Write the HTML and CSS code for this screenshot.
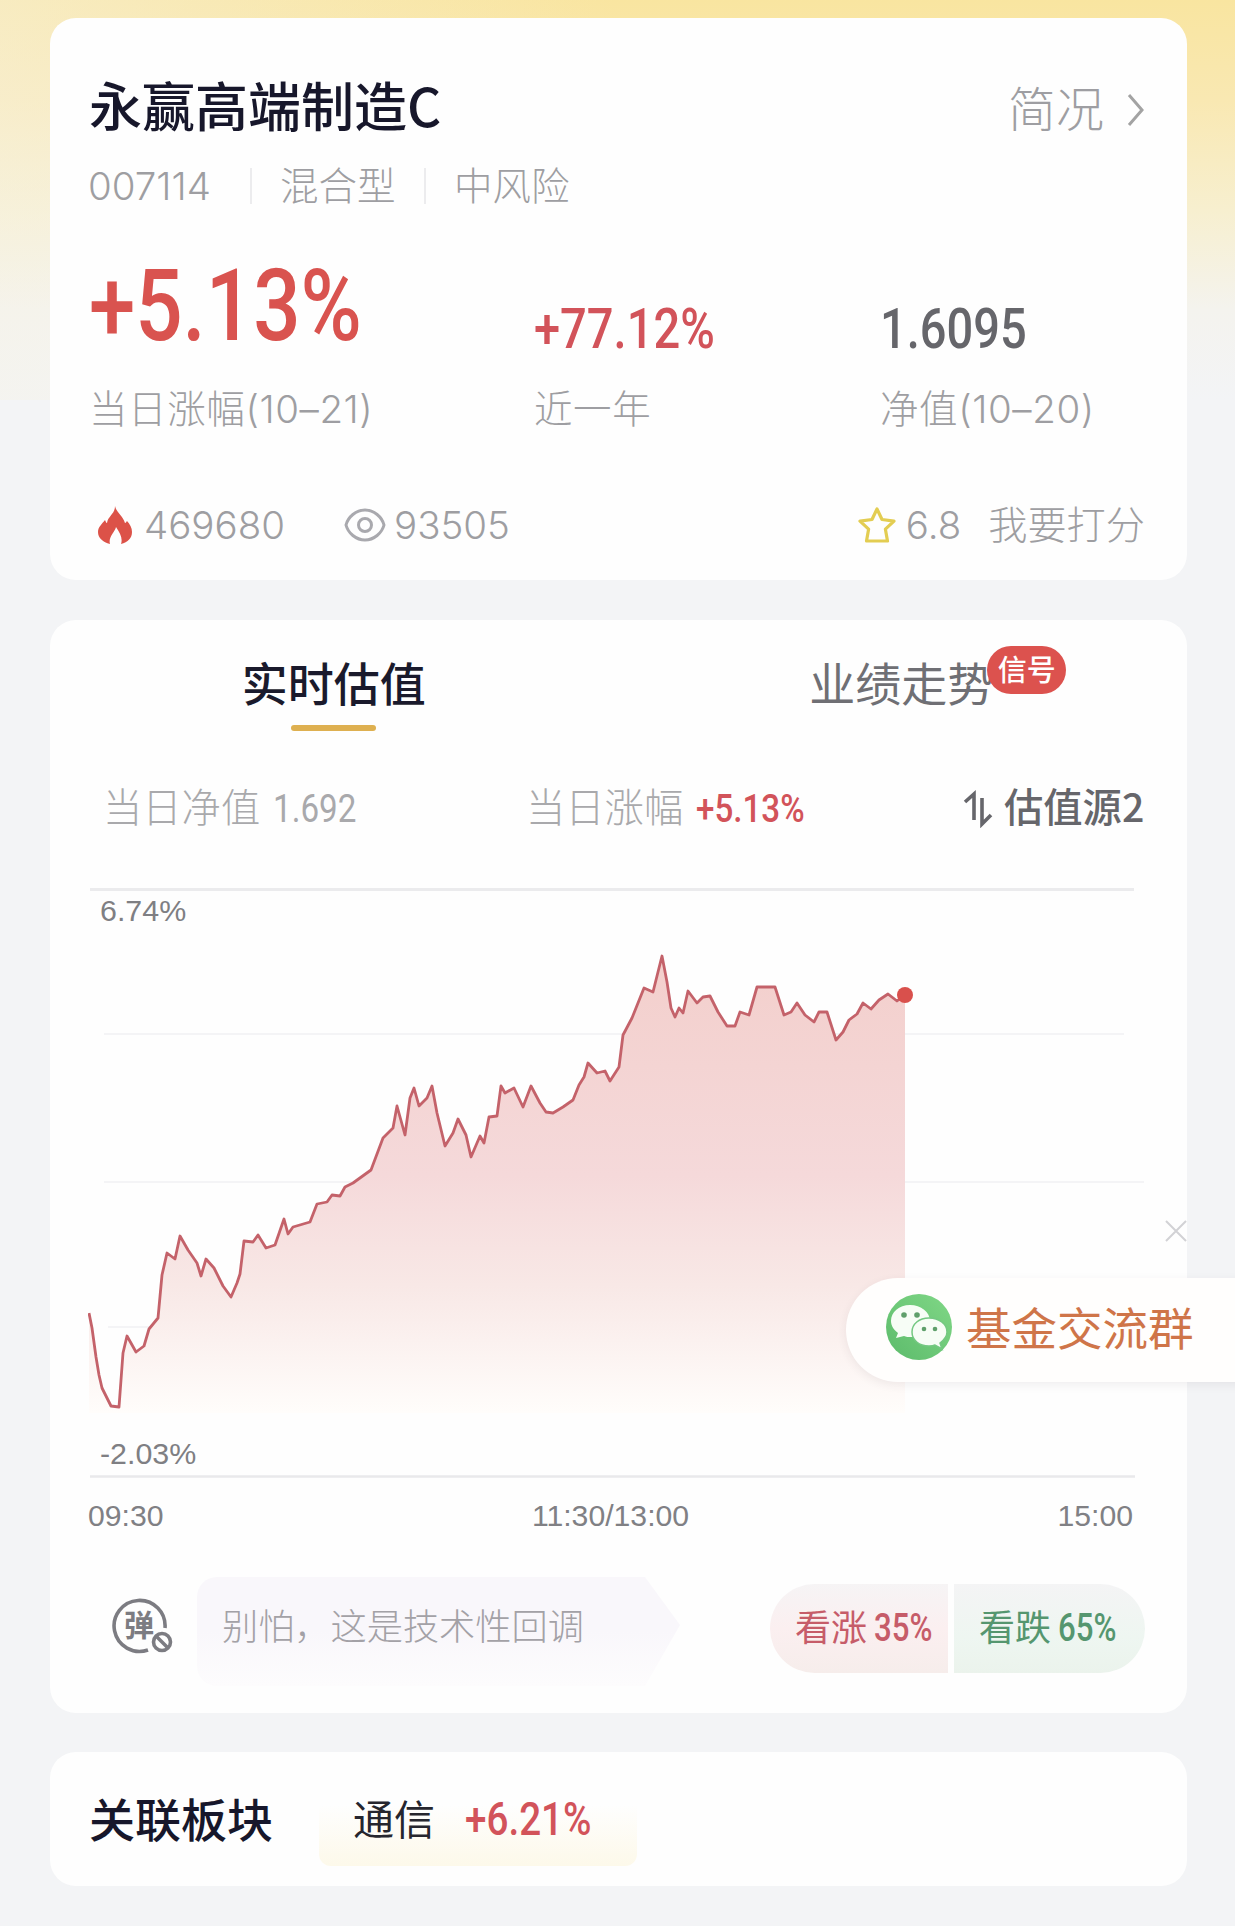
FILE: index.html
```html
<!DOCTYPE html>
<html lang="zh-CN">
<head>
    <meta charset="UTF-8">
    <meta name="viewport" content="width=device-width, initial-scale=1.0">
    <title>永赢高端制造C</title>
    <link rel="stylesheet" href="styles.css">
</head>
<body>
    <main class="page">
        <section class="card fund">
            <div class="fund-head">
                <h1>永赢高端制造C</h1>
                <a class="brief">简况
                    <svg width="18" height="34" viewBox="0 0 18 34"><path d="M2 2l13 15L2 32" fill="none" stroke="#a3a3a3" stroke-width="3"/></svg>
                </a>
            </div>
            <div class="meta">
                <span class="code">007114</span>
                <span class="type">混合型</span>
                <span class="risk">中风险</span>
            </div>
            <div class="stats">
                <div class="stat">
                    <div class="value"><span class="num big red">+5.13%</span></div>
                    <div class="label">当日涨幅(10–21)</div>
                </div>
                <div class="stat">
                    <div class="value"><span class="num mid red">+77.12%</span></div>
                    <div class="label">近一年</div>
                </div>
                <div class="stat">
                    <div class="value"><span class="num mid dark">1.6095</span></div>
                    <div class="label">净值(10–20)</div>
                </div>
            </div>
            <div class="counts">
                <svg class="fire" width="34" height="38" viewBox="0 0 34 38"><path d="M17 0C18 6 25 10 27 17C28 17 28 16 29 15C32 18 34 22 34 26C34 32 30 36 23 38C25 32 22 27 18 21C17 26 10 31 12 38C5 36 0 32 0 26C0 21 4 18 7 14C8 16 8 17 9 17C10 10 17 8 17 0Z" fill="#dc5248"/></svg>
                <span class="heat">469680</span>
                <svg class="eye" width="42" height="34" viewBox="0 0 42 34" fill="none" stroke="#a9a9ae" stroke-width="3"><path d="M2 17C4 9 12 2 21 2S38 9 40 17C38 25 30 32 21 32S4 25 2 17Z"/><circle cx="21" cy="17" r="6.5"/></svg>
                <span class="views">93505</span>
                <svg class="star" width="40" height="38" viewBox="0 0 40 38"><path d="M20 3l5 10.500 12 1.700-8.600 8 2.100 11.800H9.500l2.100-11.800L3 15.200l12-1.700z" fill="none" stroke="#e3cd52" stroke-width="3.200" stroke-linejoin="round"/></svg>
                <span class="score">6.8</span>
                <span class="rate">我要打分</span>
            </div>
        </section>

        <section class="card estimate">
            <div class="tabs">
                <div class="tab active">实时估值</div>
                <div class="tab"><span class="tab-text">业绩走势<span class="badge">信号</span></span></div>
            </div>
            <div class="info">
                <div>当日净值 <span class="num small thin">1.692</span></div>
                <div>当日涨幅 <span class="num small red">+5.13%</span></div>
                <div class="source">
                    <svg width="30" height="38" viewBox="0 0 30 38" fill="none" stroke="#66666b" stroke-width="3.600"><path d="M2 12l9-8v26"/><path d="M19 8v26l9-9"/></svg>
                    <span>估值源2</span>
                </div>
            </div>
            <svg class="chart" width="1060" height="592" viewBox="0 0 1060 592">
                <defs>
                    <linearGradient id="area" x1="0" y1="68" x2="0" y2="525" gradientUnits="userSpaceOnUse">
                        <stop offset="0" stop-color="#f3cfcc"/>
                        <stop offset="0.480" stop-color="#f5d9da"/>
                        <stop offset="0.720" stop-color="#f8e8e6"/>
                        <stop offset="1" stop-color="#fffdfb"/>
                    </linearGradient>
                </defs>
                <g stroke-width="2">
                    <path d="M2 1.500H1046" stroke="#ebebed" stroke-width="3"/>
                    <path d="M16 146H1036M16 294H1056M20 439H800" stroke="#f4f4f6"/>
                    <path d="M2 588.500H1047" stroke="#e9e9eb" stroke-width="2.500"/>
                </g>
                <path id="fill" fill="url(#area)"/>
                <path id="line" fill="none" stroke="#c4626a" stroke-width="2.800" stroke-linejoin="round"/>
                <circle cx="817" cy="107" r="8" fill="#d9504c"/>
                <text x="12" y="33">6.74%</text>
                <text x="12" y="576">-2.03%</text>
            </svg>
            <div class="axis">
                <span>09:30</span><span>11:30/13:00</span><span>15:00</span>
            </div>
            <div class="talk">
                <svg class="danmu" width="62" height="56" viewBox="0 0 62 56" fill="none" stroke="#7c7c82" stroke-width="3.600">
                    <path d="M53 30A25.500 25.500 0 1 0 36 52"/>
                    <text x="27" y="38" text-anchor="middle">弹</text>
                    <circle cx="50" cy="44" r="8.500"/>
                    <path d="M44 38l12 12"/>
                </svg>
                <div class="bubble">别怕，这是技术性回调</div>
                <div class="vote">
                    <div class="up">看涨<span class="num small">35%</span></div>
                    <div class="down">看跌<span class="num small">65%</span></div>
                </div>
            </div>
        </section>

        <section class="card sector">
            <h2>关联板块</h2>
            <div class="tag">通信<span class="num medium red">+6.21%</span></div>
        </section>

        <div class="group">
            <svg width="66" height="66" viewBox="0 0 66 66">
                <defs><linearGradient id="wx" x1="1" y1="0" x2="0" y2="1"><stop offset="0" stop-color="#80d786"/><stop offset="1" stop-color="#5cbb6b"/></linearGradient></defs>
                <circle cx="33" cy="33" r="33" fill="url(#wx)"/>
                <path d="M24 11C13 11 5 18 5 27C5 32 8 36 12 39L10 44L18 42C20 43 22 43 26 43C36 43 44 36 44 27S35 11 24 11Z" fill="#f7fdf6"/>
                <path d="M43 24C33 24 26 30 26 38S33 52 43 52C45 52 47 52 49 51L56 55L54 49C58 46 61 43 61 38C61 30 53 24 43 24Z" fill="#f7fdf6" stroke="#74c882" stroke-width="1.500"/>
                <g fill="#5f9f6b"><circle cx="18" cy="21" r="2.800"/><circle cx="31" cy="21" r="2.800"/><circle cx="38" cy="35" r="2.300"/><circle cx="49" cy="35" r="2.300"/></g>
            </svg>
            <span>基金交流群</span>
        </div>
        <svg class="close" width="24" height="24" viewBox="0 0 24 24"><path d="M2 2l20 20M22 2L2 22" stroke="#d2d2d5" stroke-width="2"/></svg>
    </main>

    <script src="chart.js"></script>
</body>
</html>
```
FILE: styles.css
```css
* {
    box-sizing: border-box;
}

body {
    margin: 0;
    font-family: Inter, "Noto Sans CJK SC", sans-serif;
    background-color: #f3f4f6;
    color: #9e9ea2;
}

.page {
    position: relative;
    height: 1926px;
    padding: 18px 48px 0 50px;
    overflow: hidden;
    background:
        linear-gradient(to right, rgba(246, 243, 232, 0.450), rgba(246, 243, 232, 0) 50%) 0 0 / 100% 400px no-repeat,
        linear-gradient(to bottom, #f9e5a0 0, #f9e8b2 100px, #f7efcf 210px, #f4f3ee 310px, #f3f4f6 400px);
}

.card {
    border-radius: 26px;
    background-color: #fefefe;
}

/* fund summary */
.fund {
    height: 562px;
    padding: 51px 42px 0 39px;
}

.fund-head {
    display: flex;
    justify-content: space-between;
    height: 70px;
    line-height: 70px;
}

h1 {
    margin: 0;
    font-family: "Noto Sans CJK SC", sans-serif;
    font-size: 53px;
    font-weight: 500;
    color: #17172b;
}

.brief {
    display: flex;
    align-items: center;
    gap: 23px;
    padding-top: 12px;
    font-size: 48px;
    font-weight: 300;
}

.meta {
    display: flex;
    align-items: center;
    height: 50px;
    margin-top: 22px;
    font-size: 38.500px;
    font-weight: 300;
    line-height: 50px;
}

.code {
    width: 162px;
    margin-left: -1px;
}

.type,
.risk {
    height: 36px;
    line-height: 36px;
    border-left: 2px solid #ececee;
}

.type {
    width: 174px;
    padding-left: 28px;
}

.risk {
    padding-left: 28px;
}

.stats {
    display: grid;
    grid-template-columns: 445px 346px 1fr;
    margin-top: 19px;
}

.value {
    display: flex;
    align-items: flex-end;
    height: 154px;
}

.label {
    height: 50px;
    font-size: 38.500px;
    font-weight: 300;
    letter-spacing: 0.600px;
    line-height: 50px;
    white-space: nowrap;
}

/* condensed figures */
.num {
    display: inline-block;
    font-family: Roboto, sans-serif;
    font-weight: 500;
    transform: scaleX(0.840);
    transform-origin: left;
}

.big {
    font-size: 101px;
    line-height: 156px;
    transform: scaleX(0.825);
}

.mid {
    font-size: 56px;
    line-height: 109px;
}

.medium {
    font-size: 46px;
}

.small {
    font-size: 39.500px;
}

.thin {
    font-weight: 400;
}

.red {
    color: #d2535a;
}

.big.red {
    color: #d9534f;
}

.dark {
    color: #66666b;
}

.counts {
    display: flex;
    align-items: center;
    height: 50px;
    margin-top: 66px;
    padding-left: 9px;
    font-size: 38.500px;
    font-weight: 300;
    line-height: 50px;
}

.heat {
    width: 200px;
    margin-left: 12px;
}

.eye {
    margin-right: 8px;
}

.star {
    margin-left: auto;
}

.score {
    margin: 0 27px 0 9px;
}

.rate {
    font-size: 39.200px;
}

/* estimate card */
.estimate {
    height: 1093px;
    margin-top: 40px;
    padding: 31px 0 0;
}

.tabs {
    display: flex;
    height: 80px;
    padding-right: 2px;
    font-size: 46px;
    line-height: 66px;
    text-align: center;
    color: #6f6f74;
}

.tab {
    flex: 1;
}

.active {
    font-weight: 500;
    color: #1a1a2c;
}

.active::after {
    content: "";
    display: block;
    width: 85px;
    height: 6px;
    margin: 8px auto 0;
    border-radius: 3px;
    background-color: #deb050;
}

.tab-text {
    position: relative;
}

.badge {
    position: absolute;
    left: 178px;
    top: -10px;
    width: 79px;
    height: 48px;
    border-radius: 24px;
    background-color: #dc524e;
    color: #fff;
    font-size: 29px;
    font-weight: 500;
    line-height: 49px;
}

.info {
    display: grid;
    grid-template-columns: 423px 437px auto;
    height: 50px;
    margin-top: 52px;
    padding-left: 53px;
    font-size: 39.300px;
    font-weight: 300;
    line-height: 50px;
    white-space: nowrap;
    color: #a9a9ac;
}

.info .num {
    margin-left: 2px;
}

.source {
    display: flex;
    align-items: center;
    gap: 11px;
    font-family: "Noto Sans CJK SC", sans-serif;
    font-weight: 500;
    color: #66666b;
}

.source span {
    margin-top: -7px;
}

.chart {
    display: block;
    margin: 55px 0 0 38px;
}

.chart text {
    font-family: "Liberation Sans", sans-serif;
    font-size: 30.400px;
    fill: #7f7f83;
}

.axis {
    display: flex;
    justify-content: space-between;
    height: 50px;
    margin: 11px 54px 0 38px;
    font-family: "Liberation Sans", sans-serif;
    font-size: 30.200px;
    line-height: 50px;
    color: #808084;
}

.talk {
    display: flex;
    align-items: center;
    height: 109px;
    margin-top: 36px;
    padding-left: 62px;
}

.danmu {
    margin-top: -12px;
}

.chart + .axis + .talk .danmu text {
    font-family: "Noto Sans CJK SC", sans-serif;
    font-size: 30px;
    font-weight: 700;
    fill: #7c7c82;
    stroke: none;
}

.bubble {
    width: 483px;
    height: 109px;
    margin-left: 23px;
    padding-left: 25px;
    border-radius: 20px 0 0 20px;
    background: linear-gradient(to bottom, #f9f7fb 50%, #fdfcfd);
    clip-path: polygon(0 0, 448px 0, 100% 48px, 448px 100%, 0 100%);
    font-size: 36.200px;
    font-weight: 300;
    line-height: 100px;
    color: #a3a1a6;
}

.vote {
    display: flex;
    gap: 6px;
    height: 89px;
    margin: -7px 0 0 90px;
    font-size: 36px;
    line-height: 88px;
    white-space: nowrap;
}

.vote .num {
    margin-left: 7px;
    transform: scaleX(0.790);
}

.up {
    width: 178px;
    padding-left: 25px;
    border-radius: 45px 0 0 45px;
    background: linear-gradient(to bottom, #f6f4f5, #fbeff0 50%, #f6edeb);
    color: #c65c69;
}

.down {
    width: 191px;
    padding-left: 25px;
    border-radius: 0 45px 45px 0;
    background: linear-gradient(to bottom, #f4f4f5, #eef6f1 60%, #ebf3ec);
    color: #55966f;
}

/* related sector */
.sector {
    display: flex;
    align-items: center;
    height: 134px;
    margin-top: 39px;
    padding-left: 39px;
}

h2 {
    margin: -4px 0 0;
    font-family: "Noto Sans CJK SC", sans-serif;
    font-size: 46px;
    font-weight: 500;
    color: #17172b;
}

.tag {
    width: 318px;
    height: 94px;
    margin-left: 46px;
    padding-left: 34px;
    border-radius: 12px;
    background: linear-gradient(to bottom, #fefefe 35%, #fdf9ea);
    font-size: 41px;
    line-height: 95px;
    white-space: nowrap;
    color: #26262e;
}

.tag .num {
    margin-left: 30px;
}

/* floating chat entry */
.group {
    position: absolute;
    left: 846px;
    top: 1278px;
    display: flex;
    align-items: center;
    gap: 14px;
    width: 420px;
    height: 104px;
    padding: 0 0 6px 40px;
    border-radius: 52px 0 0 52px;
    background-color: #fffefd;
    box-shadow: 0 3px 10px rgba(60, 50, 60, 0.080);
    font-size: 45.500px;
    color: #cf7549;
    white-space: nowrap;
}

.group span {
    margin-top: -3px;
}

.close {
    position: absolute;
    left: 1164px;
    top: 1219px;
}
```
FILE: chart.js
```js
// intraday estimate, [x, y] in chart units
const points = [
    [1,425],[4,440],[8,469],[11,487],[14,500],[23,518],[31,519],[35,465],[39,448],[48,464],
    [56,458],[61,441],[70,430],[74,387],[79,365],[87,371],[92,348],[100,362],[109,375],[113,388],
    [118,371],[126,380],[135,398],[143,409],[149,395],[152,386],[156,353],[165,354],[170,347],[178,360],
    [187,357],[196,331],[200,346],[205,339],[222,334],[229,316],[239,314],[244,307],[252,308],[257,299],
    [265,295],[283,282],[295,250],[305,240],[309,218],[317,247],[322,210],[326,200],[331,218],[339,210],
    [344,198],[349,225],[357,258],[365,245],[370,231],[378,247],[383,269],[392,248],[396,255],[401,229],
    [409,228],[413,198],[417,205],[426,200],[435,219],[443,198],[452,215],[458,224],[465,225],[475,219],
    [485,212],[491,197],[496,189],[500,175],[509,185],[517,183],[522,193],[531,179],[535,147],[544,130],
    [556,100],[565,104],[574,68],[579,94],[583,120],[587,129],[591,120],[595,125],[600,103],[609,115],
    [615,109],[622,108],[630,124],[639,138],[647,138],[652,124],[661,127],[669,99],[687,99],[696,127],
    [703,124],[709,115],[717,127],[726,134],[731,124],[739,124],[748,152],[755,144],[761,132],[769,126],
    [775,115],[783,121],[791,112],[800,106],[809,113],[817,107]
];

const d = 'M' + points.map(p => p.join(' ')).join('L');
document.getElementById('line').setAttribute('d', d);
document.getElementById('fill').setAttribute('d', d + 'V525H1Z');
```
